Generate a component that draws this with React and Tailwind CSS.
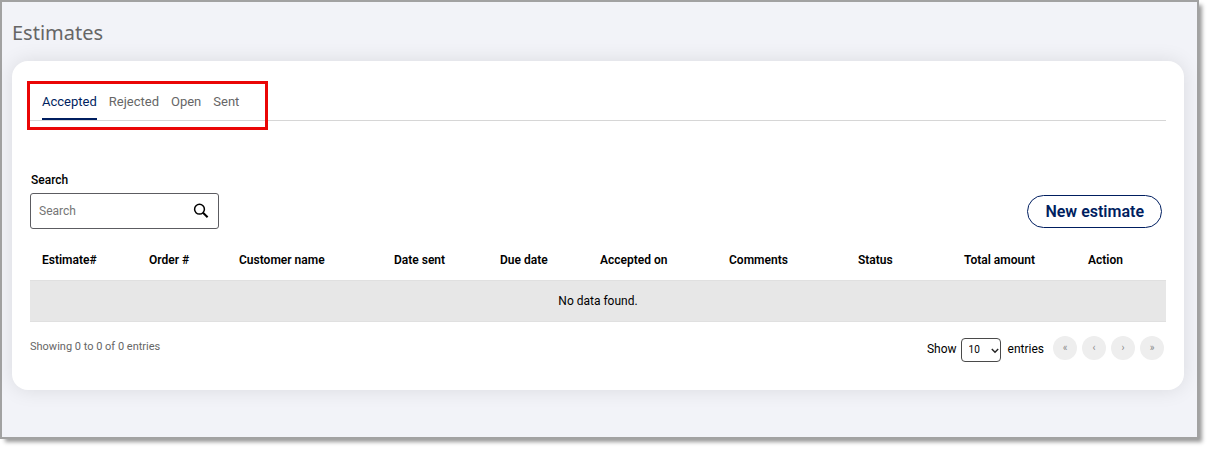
import { useState } from 'react';

const TABS = ['Accepted', 'Rejected', 'Open', 'Sent'];

const COLUMNS = [
  { label: 'Estimate#', width: 'w-[107px]' },
  { label: 'Order #', width: 'w-[90px]' },
  { label: 'Customer name', width: 'w-[155px]' },
  { label: 'Date sent', width: 'w-[106px]' },
  { label: 'Due date', width: 'w-[100px]' },
  { label: 'Accepted on', width: 'w-[129px]' },
  { label: 'Comments', width: 'w-[129px]' },
  { label: 'Status', width: 'w-[106px]' },
  { label: 'Total amount', width: 'w-[124px]' },
  { label: 'Action', width: 'w-[90px]' }
];

const PAGER = [
  { glyph: '«', label: 'First page' },
  { glyph: '‹', label: 'Previous page' },
  { glyph: '›', label: 'Next page' },
  { glyph: '»', label: 'Last page' }
];

function Tabs({ active, onChange }) {
  return (
    <div className="relative">
      <div role="tablist" className="flex gap-3 border-b border-[#d6d6d6] px-3">
        {TABS.map((tab) => (
          <button
            key={tab}
            type="button"
            role="tab"
            aria-selected={tab === active}
            onClick={() => onChange(tab)}
            className={`cursor-pointer border-b-2 pt-[9px] pb-[6px] text-[13px] leading-5 ${
              tab === active ? 'border-[#001e60] text-[#001e60]' : 'border-transparent text-[#666]'
            }`}
          >
            {tab}
          </button>
        ))}
      </div>
      {/* Highlight around the tab list */}
      <div className="pointer-events-none absolute -top-[2px] -left-[3px] h-[49px] w-[241px] border-3 border-[#ea0606]" />
    </div>
  );
}

function SearchBox({ value, onChange }) {
  return (
    <div>
      <label htmlFor="search" className="block px-px text-xs leading-4 font-medium text-black">
        Search
      </label>
      <div className="mt-[5px] flex h-9 w-[189px] items-center rounded-[3px] border border-[#5c5c61] pr-[9px] pl-2">
        <input
          id="search"
          type="text"
          placeholder="Search"
          value={value}
          onChange={(e) => onChange(e.target.value)}
          className="w-full min-w-0 text-xs text-black outline-none placeholder:text-[#757575]"
        />
        <svg width="16" height="16" viewBox="0 0 16 16" fill="none" stroke="#000" aria-hidden="true" className="shrink-0">
          <circle cx="6.5" cy="6.2" r="4.9" strokeWidth="1.5" />
          <path d="M10 9.8 L14.6 14.3" strokeWidth="2" />
        </svg>
      </div>
    </div>
  );
}

function EstimatesTable() {
  return (
    <table className="mt-[11px] w-full table-fixed text-xs leading-4 text-black">
      <thead>
        <tr>
          {COLUMNS.map((col) => (
            <th key={col.label} scope="col" className={`h-10 px-3 text-left font-semibold ${col.width}`}>
              {col.label}
            </th>
          ))}
        </tr>
      </thead>
      <tbody>
        <tr className="border-y border-[#e0e0e0] bg-[#e7e7e7]">
          <td colSpan={COLUMNS.length} className="h-[41px] px-3 text-center">
            No data found.
          </td>
        </tr>
      </tbody>
    </table>
  );
}

function TableFooter({ pageSize, onPageSize }) {
  return (
    <div className="mt-[14px] flex items-start justify-between">
      <p className="pt-[3px] text-[11px] leading-4 text-[#666]">Showing 0 to 0 of 0 entries</p>
      <div className="flex items-start pr-[2px]">
        <div className="flex items-center text-xs text-black">
          <label htmlFor="page-size">Show</label>
          <div className="relative mt-[2px] mr-[7px] ml-1">
            <select
              id="page-size"
              value={pageSize}
              onChange={(e) => onPageSize(e.target.value)}
              className="block h-6 w-10 appearance-none rounded-[4px] border border-[#4a4a4a] pt-px pl-[7px] text-[10px]"
            >
              <option>10</option>
              <option>25</option>
              <option>50</option>
            </select>
            <svg
              width="8"
              height="6"
              viewBox="0 0 8 6"
              fill="none"
              stroke="#222"
              strokeWidth="1.4"
              aria-hidden="true"
              className="pointer-events-none absolute top-[10px] right-[2px]"
            >
              <path d="M0.8 1 L4 4.3 L7.2 1" />
            </svg>
          </div>
          <span>entries</span>
        </div>
        <div className="ml-[9px] flex gap-[5px]">
          {PAGER.map((item) => (
            <button
              key={item.label}
              type="button"
              aria-label={item.label}
              className="size-6 rounded-full bg-[#eee] text-[10px] leading-6 text-[#8a8a8a]"
            >
              {item.glyph}
            </button>
          ))}
        </div>
      </div>
    </div>
  );
}

export default function App() {
  const [activeTab, setActiveTab] = useState('Accepted');
  const [query, setQuery] = useState('');
  const [pageSize, setPageSize] = useState('10');

  return (
    <div className="flex min-h-screen bg-white pr-3 pb-3 font-['Roboto',sans-serif]">
      <main className="flex-1 border-2 border-[#a2a2a2] bg-[#f2f3f8] pt-[15px] pr-[13px] pb-8 pl-[10px] shadow-[4px_4px_4px_-1px_rgba(0,0,0,0.4)]">
        <h1 className="font-['Noto_Sans',sans-serif] text-xl leading-8 text-[#666]">Estimates</h1>

        <section className="mt-3 rounded-2xl bg-white px-[18px] pt-[22px] pb-7 shadow-[0_0_20px_rgba(0,0,0,0.1)]">
          <Tabs active={activeTab} onChange={setActiveTab} />

          <div className="mt-[51px] flex items-end justify-between">
            <SearchBox value={query} onChange={setQuery} />
            <button
              type="button"
              className="mr-1 mb-px h-[33px] cursor-pointer rounded-full border border-[#001e60] px-[17px] text-base font-semibold text-[#001e60]"
            >
              New estimate
            </button>
          </div>

          <EstimatesTable />
          <TableFooter pageSize={pageSize} onPageSize={setPageSize} />
        </section>
      </main>
    </div>
  );
}
